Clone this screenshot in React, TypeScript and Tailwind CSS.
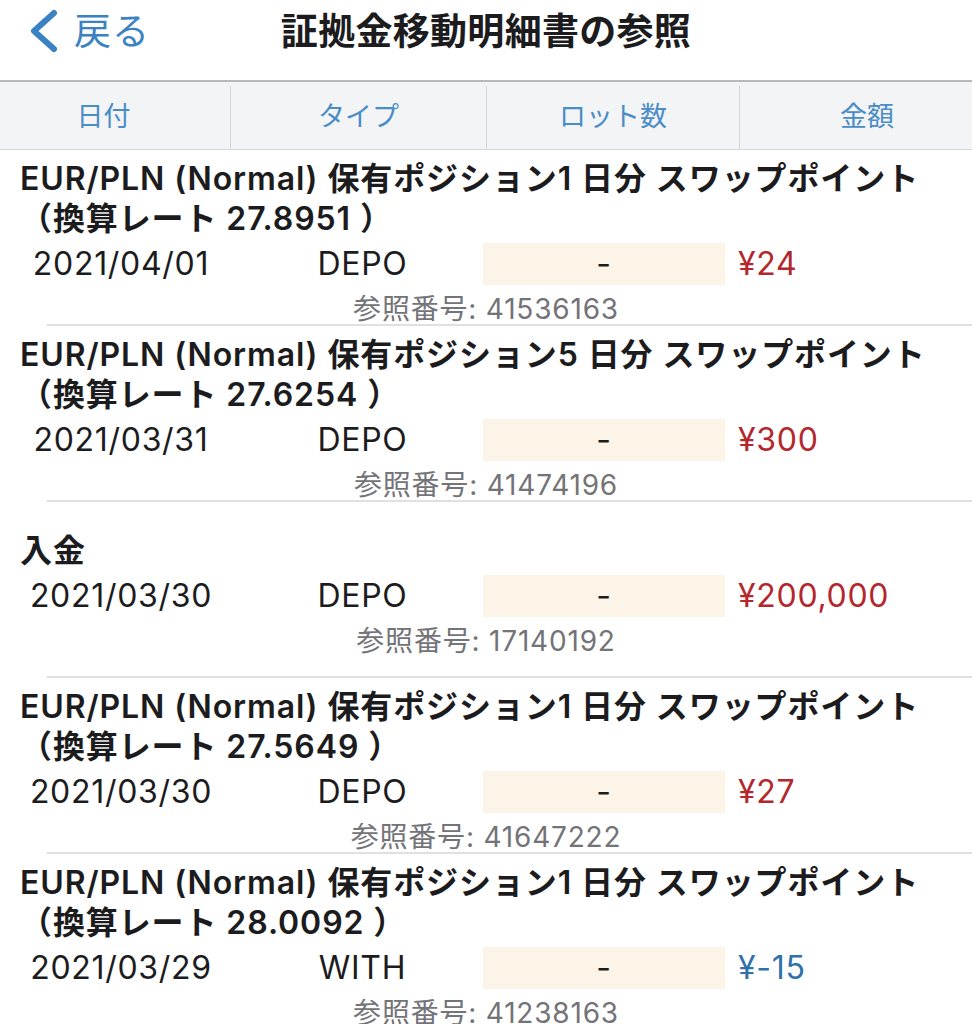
import React from "react";

type Row = {
  title: string[];
  date: string;
  type: string;
  amount: string;
  negative?: boolean;
  ref: string;
};

const rows: Row[] = [
  {
    title: ["EUR/PLN (Normal) 保有ポジション1 日分 スワップポイント", "（換算レート 27.8951 ）"],
    date: "2021/04/01",
    type: "DEPO",
    amount: "¥24",
    ref: "41536163",
  },
  {
    title: ["EUR/PLN (Normal) 保有ポジション5 日分 スワップポイント", "（換算レート 27.6254 ）"],
    date: "2021/03/31",
    type: "DEPO",
    amount: "¥300",
    ref: "41474196",
  },
  {
    title: ["入金"],
    date: "2021/03/30",
    type: "DEPO",
    amount: "¥200,000",
    ref: "17140192",
  },
  {
    title: ["EUR/PLN (Normal) 保有ポジション1 日分 スワップポイント", "（換算レート 27.5649 ）"],
    date: "2021/03/30",
    type: "DEPO",
    amount: "¥27",
    ref: "41647222",
  },
  {
    title: ["EUR/PLN (Normal) 保有ポジション1 日分 スワップポイント", "（換算レート 28.0092 ）"],
    date: "2021/03/29",
    type: "WITH",
    amount: "¥-15",
    negative: true,
    ref: "41238163",
  },
];

export default function App() {
  return (
    <div
      className="w-[972px] h-[1024px] overflow-hidden bg-white text-[#1c1c1e]"
      style={{ fontFamily: "Inter, 'Noto Sans CJK JP', sans-serif" }}
    >
      {/* Nav bar */}
      <div className="relative h-[82px] border-b-2 border-[#b8b8bc]">
        <div className="h-[62px] flex items-center pl-[28px] gap-[14px] text-[#3b82c4]">
          <svg width="32" height="44" viewBox="0 0 32 44">
            <path
              d="M26 4 L6 22 L26 40"
              fill="none"
              stroke="#3b82c4"
              strokeWidth="6"
              strokeLinecap="round"
              strokeLinejoin="round"
            />
          </svg>
          <span className="text-[37px] leading-none tracking-[1px]">戻る</span>
        </div>
        <div className="absolute left-0 right-0 top-0 h-[62px] flex items-center justify-center pointer-events-none">
          <span className="text-[37px] font-bold leading-none tracking-[0.3px]">証拠金移動明細書の参照</span>
        </div>
      </div>

      {/* Column header */}
      <div className="flex h-[68px] bg-[#f3f4f6] border-b border-[#d4d6da] text-[#4a8cc6] text-[27px] pt-[4px]">
        <div className="w-[231px] flex items-center justify-center pr-[23px] border-r border-[#d4d6da]">日付</div>
        <div className="w-[256px] flex items-center justify-center border-r border-[#d4d6da]">タイプ</div>
        <div className="w-[253px] flex items-center justify-center border-r border-[#d4d6da]">ロット数</div>
        <div className="flex-1 flex items-center justify-center pl-[22px]">金額</div>
      </div>

      {/* Rows */}
      {rows.map((r, i) => (
        <div key={i} className="relative h-[176px] flex flex-col justify-center pt-[9px]">
          <div className="text-[32px] font-semibold leading-[40px] pl-[20px] tracking-[0.9px]">
            {r.title.map((t, j) => (
              <div key={j} className="whitespace-nowrap">
                {t}
              </div>
            ))}
          </div>
          <div className="grid grid-cols-[242px_241px_242px_1fr] mt-[4px] h-[42px] text-[32px] leading-[42px] tracking-[0.7px]">
            <div className="text-center">{r.date}</div>
            <div className="text-center">{r.type}</div>
            <div className="bg-[#fdf4e8] text-center">-</div>
            <div className={`pl-[13px] ${r.negative ? "text-[#2f72aa]" : "text-[#b3272d]"}`}>{r.amount}</div>
          </div>
          <div className="mt-[7px] h-[34px] leading-[34px] text-center text-[28px] tracking-[0.8px] text-[#737378]">
            参照番号: {r.ref}
          </div>
          <div className="absolute bottom-0 left-[47px] right-0 h-[2px] bg-[#e0e0e2]" />
        </div>
      ))}
    </div>
  );
}
